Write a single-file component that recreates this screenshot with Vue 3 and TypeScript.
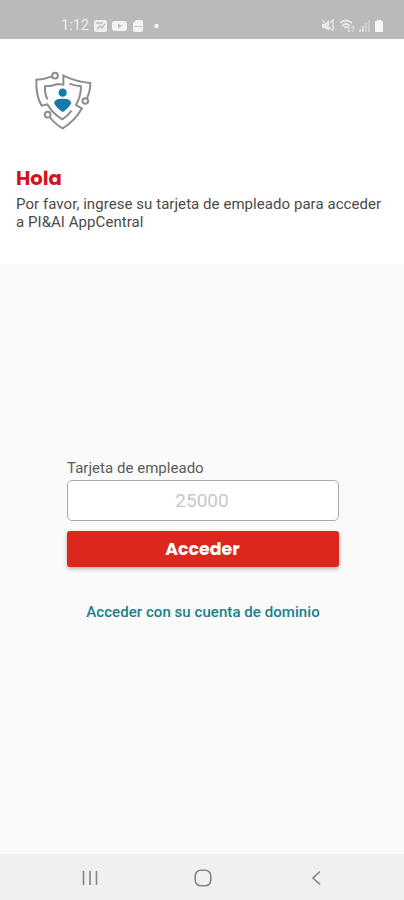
<script setup lang="ts">
import { ref } from 'vue'

const card = ref<string>('')
</script>

<template>
  <div class="screen">
    <header class="status">
      <span class="time">1:12</span>
      <svg class="notices" width="66" height="14" viewBox="0 0 66 14">
        <rect x="0" y="1" width="13" height="12" rx="2" fill="#eee" />
        <path d="M2 4H9M3 10L6 7L8 9L11 5" fill="none" stroke="#bbb" stroke-width="1.3" />
        <rect x="18" y="2" width="15" height="10" rx="3" fill="#f2f2f2" />
        <path d="M24 4.5L28 7L24 9.5Z" fill="#bbb" />
        <path d="M42 1H47Q49 1 49 3V11Q49 13 47 13H41Q39 13 39 11V4Z" fill="#f2f2f2" />
        <path d="M40 7.5H48" stroke="#ccc" />
        <circle cx="62.5" cy="7" r="2.2" fill="#f5f5f5" />
      </svg>
      <svg class="system" width="62" height="16" viewBox="0 0 62 16">
        <path d="M1 6H4L8 2V13L4 10H1Z" fill="#ececec" />
        <path d="M1 2L12 13M9 5L12 2V12" fill="none" stroke="#e2e2e2" stroke-width="1.5" />
        <path d="M19 5Q25 0 31 5M21 8Q25 4 29 8M23 10Q25 8 27 10" fill="none" stroke="#e8e8e8" stroke-width="1.7" />
        <path d="M28 8V14M26 12L28 14L30 12M32 14V8M30 10L32 8L34 10" fill="none" stroke="#e2e2e2" />
        <path d="M39 14V11M42 14V8" stroke="#dedede" stroke-width="2" />
        <path d="M45 14V5M48 14V2" stroke="#cfcfcf" stroke-width="1.8" />
        <path d="M56 3V2H60V3H61Q62 3 62 4V13Q62 14 61 14H55Q54 14 54 13V4Q54 3 55 3Z" fill="#f8f8f8" />
      </svg>
    </header>

    <section class="intro">
      <svg class="logo" width="90" height="80" viewBox="0 0 270 240">
        <g fill="none" stroke="#8b8d8f" stroke-width="6">
          <path d="M96 49Q74 58 49 59C48 88 52 116 65 137L82 133L96 153Q110 168 127 178Q143 168 155 152" />
          <path d="M82 118Q73 99 75 79Q95 79 113 72L130 74V47Q170 66 211 69Q211 94 201 114" />
          <path d="M148 71Q165 77 183 79Q183 109 168 135L186 145Q164 184 128 205Q105 192 89 171" />
          <circle cx="105" cy="47" r="8.5" />
          <circle cx="196" cy="123" r="8.5" />
          <circle cx="83" cy="164" r="8.5" />
        </g>
        <circle cx="128" cy="98" r="12.5" fill="#1479ab" />
        <path d="M114 117Q128 115 142 117Q152 120 154 129Q145 146 128 156Q111 146 102 129Q104 120 114 117Z" fill="#1479ab" />
      </svg>
      <h1 class="title">Hola</h1>
      <p class="text"><span class="first">Por favor, ingrese su tarjeta de empleado para acceder</span><br /><span class="second">a PI&amp;AI AppCentral</span></p>
    </section>

    <main class="content">
      <label class="label" for="card">Tarjeta de empleado</label>
      <input id="card" v-model="card" class="field" placeholder="25000" />
      <button class="submit" type="button">Acceder</button>
      <a class="domain">Acceder con su cuenta de dominio</a>
    </main>

    <nav class="nav">
      <svg width="16" height="16" viewBox="0 0 16 16"><path d="M1.5 1V15M8 1V15M14.5 1V15" stroke="#858585" stroke-width="1.6" /></svg>
      <svg width="18" height="18" viewBox="0 0 18 18"><rect x="1.2" y="1.2" width="15.6" height="15.6" rx="5.5" fill="none" stroke="#858585" stroke-width="1.6" /></svg>
      <svg width="16" height="16" viewBox="0 0 16 16"><path d="M12 1.5L5 8L12 14.5" fill="none" stroke="#858585" stroke-width="1.7" /></svg>
    </nav>
  </div>
</template>

<style>
body {
  margin: 0;
}
</style>

<style scoped>
.screen {
  box-sizing: border-box;
  display: flex;
  flex-direction: column;
  width: 404px;
  height: 900px;
  background: #fafafa;
  font-family: Roboto, "Liberation Sans", sans-serif;
}
.status {
  box-sizing: border-box;
  display: flex;
  align-items: center;
  height: 39px;
  padding: 12px 21px 0 61px;
  background: #bababa;
}
.time {
  width: 33px;
  color: #eee;
  font-size: 14.5px;
  line-height: 16px;
}
.system {
  margin-left: auto;
}
.intro {
  box-sizing: border-box;
  height: 225px;
  padding: 21px 16px 0;
  background: #fff;
}
.logo {
  display: block;
  margin-left: 4px;
}
.title {
  margin: 26px 0 0;
  color: #d51317;
  font-family: Poppins, Inter, sans-serif;
  font-size: 19.6px;
  font-weight: 700;
  line-height: 24px;
}
.text {
  margin: 5px 0 0;
  color: #4a4a4a;
  font-size: 15px;
  letter-spacing: 0.055px;
  line-height: 18px;
  white-space: nowrap;
}
.content {
  display: flex;
  flex: 1;
  flex-direction: column;
  padding: 194px 65px 0 67px;
}
.label {
  color: #5a5a5a;
  font-size: 15px;
  letter-spacing: 0.03px;
  line-height: 20px;
}
.field {
  box-sizing: border-box;
  width: 272px;
  height: 41px;
  margin: 2px 0 0;
  padding: 0 2px 0 0;
  border: 1px solid #aaa;
  border-radius: 5px;
  background: #fff;
  font: 19px Roboto, sans-serif;
  text-align: center;
}
.field::placeholder {
  color: #c8c8c8;
  opacity: 1;
}
.submit {
  height: 36px;
  margin: 10px 0 0;
  padding: 0 1px 0 0;
  border: 0;
  border-radius: 3px;
  background: #dc281c;
  box-shadow: 0 2px 4px rgb(0 0 0 / 28%);
  color: #fff;
  font: 700 17.4px/34px Poppins, Inter, sans-serif;
}
.domain {
  margin-top: 35px;
  color: #16818d;
  font-size: 15px;
  font-weight: 500;
  letter-spacing: 0.06px;
  line-height: 20px;
  text-align: center;
}
.nav {
  box-sizing: border-box;
  display: flex;
  align-items: center;
  justify-content: space-between;
  height: 46px;
  padding: 2px 80px 0 82px;
  background: #f0f0f0;
}
</style>
